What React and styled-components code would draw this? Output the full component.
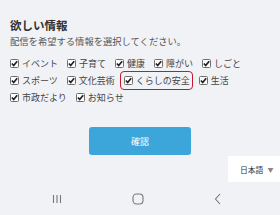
import React from 'react'
import styled, { createGlobalStyle } from 'styled-components'

const GlobalStyle = createGlobalStyle`
  html, body {
    margin: 0;
    padding: 0;
    background: #f1f2f6;
  }
  body {
    font-family: "Noto Sans CJK JP", "Noto Sans", sans-serif;
  }
`

const topics = [
  { label: 'イベント' },
  { label: '子育て' },
  { label: '健康' },
  { label: '障がい' },
  { label: 'しごと' },
  { label: 'スポーツ' },
  { label: '文化芸術' },
  { label: 'くらしの安全', focus: true },
  { label: '生活' },
  { label: '市政だより' },
  { label: 'お知らせ' },
]

const Check = () => (
  <Box>
    <svg width="7" height="7" viewBox="0 0 7 7">
      <path d="M0.9 3.5 L2.7 5.5 L6.2 1.2" fill="none" stroke="#222" strokeWidth="1.7" />
    </svg>
  </Box>
)

const App = () => {
  return (
    <Page>
      <GlobalStyle />
      <Content>
        <Title>欲しい情報</Title>
        <Sub>配信を希望する情報を選択してください。</Sub>
        <Options>
          {topics.map((t) => (
            <Option key={t.label} $focus={t.focus}>
              <Check />
              <span>{t.label}</span>
            </Option>
          ))}
        </Options>
        <ButtonRow>
          <Confirm>確認</Confirm>
        </ButtonRow>
      </Content>
      <LangRow>
        <Lang>
          日本語 <Arrow>▼</Arrow>
        </Lang>
      </LangRow>
      <NavBar>
        <svg width="10" height="10" viewBox="0 0 10 10">
          <path d="M1.5 1 V9 M5 1 V9 M8.5 1 V9" stroke="#777" strokeWidth="1.1" />
        </svg>
        <svg width="12" height="12" viewBox="0 0 12 12">
          <rect x="1" y="1" width="10" height="10" rx="3.5" fill="none" stroke="#777" strokeWidth="1.1" />
        </svg>
        <svg width="8" height="12" viewBox="0 0 8 12">
          <path d="M6 1 L1.5 6 L6 11" fill="none" stroke="#777" strokeWidth="1.1" />
        </svg>
      </NavBar>
    </Page>
  )
}

const Page = styled.div`
  width: 280px;
  height: 215px;
  display: flex;
  flex-direction: column;
  overflow: hidden;
`

const Content = styled.div`
  flex: 1;
  padding: 18px 10px 0 10px;
`

const Title = styled.div`
  font-size: 11.5px;
  font-weight: 700;
  line-height: 14px;
  color: #333;
`

const Sub = styled.div`
  margin-top: 3px;
  font-size: 9.3px;
  line-height: 12px;
  color: #555;
  white-space: nowrap;
`

const Options = styled.div`
  margin-top: 9px;
  display: flex;
  flex-wrap: wrap;
  align-items: center;
  width: 250px;
`

const Option = styled.label`
  display: flex;
  align-items: center;
  gap: 3px;
  height: ${(p) => (p.$focus ? '19px' : '15px')};
  margin-right: ${(p) => (p.$focus ? '6px' : '9px')};
  margin-left: ${(p) => (p.$focus ? '-4px' : '0')};
  padding: ${(p) => (p.$focus ? '0 2px 0 3px' : '0')};
  box-sizing: border-box;
  border: ${(p) => (p.$focus ? '1.5px solid #c9172f' : 'none')};
  border-radius: 4px;
  font-size: 9px;
  color: #444;
  white-space: nowrap;
`

const Box = styled.span`
  width: 9px;
  height: 9px;
  box-sizing: border-box;
  border: 1px solid #6f6f6f;
  border-radius: 1.5px;
  background: #fdfdfd;
  display: flex;
  align-items: center;
  justify-content: center;
`

const ButtonRow = styled.div`
  margin-top: 22px;
  display: flex;
  justify-content: center;
`

const Confirm = styled.button`
  width: 102px;
  height: 28px;
  border: none;
  border-radius: 3px;
  background: #3ca6db;
  color: #fff;
  font-family: inherit;
  font-size: 9px;
  padding: 0;
`

const LangRow = styled.div`
  display: flex;
  justify-content: flex-end;
`

const Lang = styled.div`
  width: 52px;
  height: 26px;
  background: #fff;
  box-sizing: border-box;
  padding-left: 12px;
  display: flex;
  align-items: center;
  font-size: 7.8px;
  color: #333;
`

const Arrow = styled.span`
  margin-left: 4px;
  font-size: 6px;
  color: #888;
`

const NavBar = styled.div`
  height: 33px;
  display: flex;
  align-items: center;
  justify-content: space-between;
  padding: 0 58px 0 52px;
`

export default App
